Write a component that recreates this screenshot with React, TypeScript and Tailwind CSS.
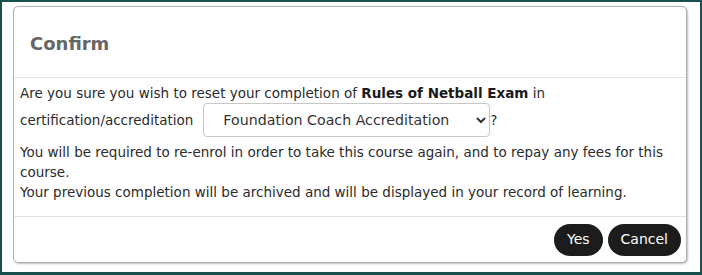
export default function App() {
  return (
    <div
      className="w-[702px] h-[275px] border-2 border-b-[3px] border-[#17504d] bg-white pl-[11px] pr-[12px] pt-[4px]"
      style={{ fontFamily: '"DejaVu Sans", sans-serif' }}
    >
      <div className="w-[674px] h-[257px] bg-white border border-[#b0b0b0] rounded-[5px] shadow-[1px_1px_2px_rgba(0,0,0,0.25)] flex flex-col">
        <div className="h-[71px] border-b border-[#e3e3e3] flex items-center px-[16px] pt-[2px]">
          <h2 className="text-[18px] font-bold text-[#666666]">Confirm</h2>
        </div>
        <div className="flex-1 px-[6px] pt-[5px] text-[13.5px] text-[#2b2b2b] leading-[20px]">
          <p>
            Are you sure you wish to reset your completion of <b className="text-[#1a1a1a]">Rules of Netball Exam</b> in
          </p>
          <p className="flex items-center">
            certification/accreditation
            <select className="ml-[10px] w-[287px] h-[34px] border border-[#c8c8c8] rounded-[4px] pl-[15px] pr-[4px] text-[14.2px] text-[#333] bg-white">
              <option>Foundation Coach Accreditation</option>
            </select>
            ?
          </p>
          <p className="mt-[5px]">
            You will be required to re-enrol in order to take this course again, and to repay any fees for this course.
          </p>
          <p>Your previous completion will be archived and will be displayed in your record of learning.</p>
        </div>
        <div className="h-[46px] border-t border-[#e3e3e3] flex items-center justify-end gap-[5px] px-[5px]">
          <button className="h-[32px] px-[13px] rounded-full bg-[#1c1c1c] text-white text-[14px]">Yes</button>
          <button className="h-[32px] px-[13px] rounded-full bg-[#1c1c1c] text-white text-[14px]">Cancel</button>
        </div>
      </div>
    </div>
  );
}
